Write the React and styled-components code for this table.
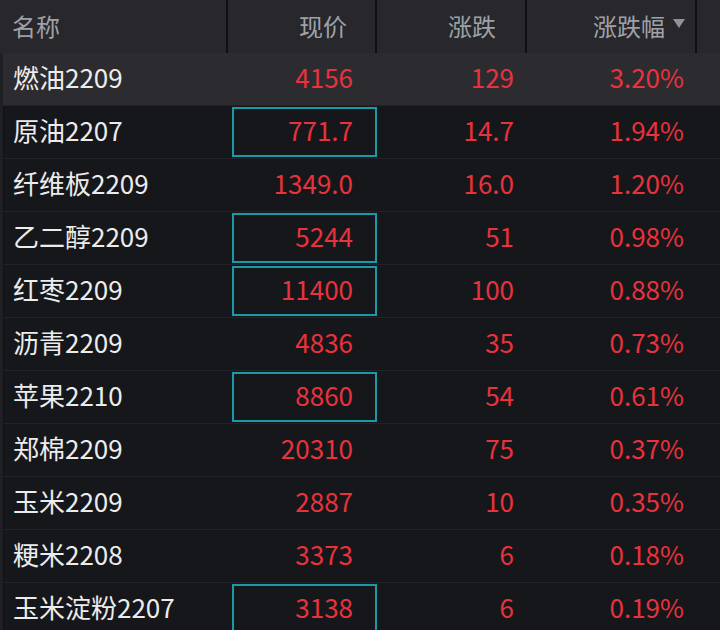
import React from "react";
import styled, { createGlobalStyle } from "styled-components";

const rows = [
  { name: "燃油2209", price: "4156", change: "129", pct: "3.20%", active: true },
  { name: "原油2207", price: "771.7", change: "14.7", pct: "1.94%", boxed: true },
  { name: "纤维板2209", price: "1349.0", change: "16.0", pct: "1.20%" },
  { name: "乙二醇2209", price: "5244", change: "51", pct: "0.98%", boxed: true },
  { name: "红枣2209", price: "11400", change: "100", pct: "0.88%", boxed: true },
  { name: "沥青2209", price: "4836", change: "35", pct: "0.73%" },
  { name: "苹果2210", price: "8860", change: "54", pct: "0.61%", boxed: true },
  { name: "郑棉2209", price: "20310", change: "75", pct: "0.37%" },
  { name: "玉米2209", price: "2887", change: "10", pct: "0.35%" },
  { name: "粳米2208", price: "3373", change: "6", pct: "0.18%" },
  { name: "玉米淀粉2207", price: "3138", change: "6", pct: "0.19%", boxed: true },
];

function App() {
  return (
    <>
      <GlobalStyle />
      <Board>
        <HeaderRow>
          <HeadCell $align="left">名称</HeadCell>
          <HeadCell $pad={28}>现价</HeadCell>
          <HeadCell $pad={29}>涨跌</HeadCell>
          <HeadCell $pad={10}>
            涨跌幅
            <SortArrow />
          </HeadCell>
          <HeadCell $last />
        </HeaderRow>
        <Body>
          {rows.map((r) => (
            <Row key={r.name} $active={r.active}>
              <Name>{r.name}</Name>
              <PriceCell $boxed={r.boxed}>{r.price}</PriceCell>
              <Value $pad={14}>{r.change}</Value>
              <Value $pad={14}>{r.pct}</Value>
              <span />
            </Row>
          ))}
        </Body>
      </Board>
    </>
  );
}

export default App;

const GlobalStyle = createGlobalStyle`
  html, body {
    margin: 0;
    padding: 0;
    background: #16171b;
  }
  body {
    font-family: "Noto Sans CJK SC", "Noto Sans", sans-serif;
  }
`;

const cols = "228px 149px 150px 170px 23px";

const Board = styled.div`
  width: 720px;
  height: 630px;
  overflow: hidden;
  background: #16171b;
`;

const HeaderRow = styled.div`
  display: grid;
  grid-template-columns: ${cols};
  height: 53px;
  background: #28282c;
`;

const HeadCell = styled.div`
  display: flex;
  align-items: center;
  justify-content: ${(p) => (p.$align === "left" ? "flex-start" : "flex-end")};
  padding: ${(p) => (p.$align === "left" ? "0 0 3px 12px" : `0 ${p.$pad || 0}px 3px 0`)};
  border-right: ${(p) => (p.$last ? "none" : "2px solid #0e0f12")};
  color: #9ea2a8;
  font-size: 24px;
`;

const SortArrow = styled.span`
  width: 0;
  height: 0;
  margin-left: 8px;
  margin-bottom: 4px;
  border-left: 6px solid transparent;
  border-right: 6px solid transparent;
  border-top: 9px solid #8f9298;
`;

const Body = styled.div`
  border-left: 3px solid #1f2024;
`;

const Row = styled.div`
  display: grid;
  grid-template-columns: 225px 149px 150px 170px 23px;
  height: 52px;
  border-bottom: 1px solid #222328;
  align-items: center;
  background: ${(p) => (p.$active ? "#2c2c30" : "transparent")};
  border-left: 1px solid ${(p) => (p.$active ? "#2c2c30" : "#0f1013")};
`;

const Name = styled.div`
  padding-left: 9px;
  padding-bottom: 5px;
  color: #ececec;
  font-size: 26px;
  white-space: nowrap;
`;

const Value = styled.div`
  text-align: right;
  padding-right: ${(p) => p.$pad}px;
  padding-bottom: 5px;
  color: #e8323c;
  font-size: 26px;
  white-space: nowrap;
`;

const PriceCell = styled.div`
  box-sizing: border-box;
  height: 50px;
  margin: 0 1px 0 3px;
  display: flex;
  align-items: center;
  justify-content: flex-end;
  padding: 0 22px 5px 0;
  border: 2px solid ${(p) => (p.$boxed ? "#1a9aa6" : "transparent")};
  color: #e8323c;
  font-size: 26px;
  white-space: nowrap;
`;
